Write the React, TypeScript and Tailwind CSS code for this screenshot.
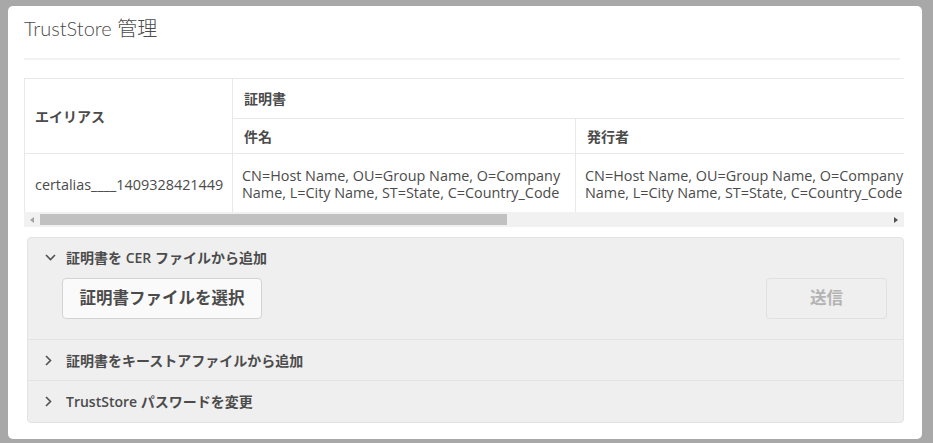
const CERT_TEXT = "CN=Host Name, OU=Group Name, O=Company Name, L=City Name, ST=State, C=Country_Code";

const FONT = { fontFamily: '"Open Sans", "Noto Sans CJK JP", sans-serif' };
const TITLE_FONT = { fontFamily: 'Lato, "Noto Sans CJK JP", sans-serif' };

function ChevronDown() {
  return (
    <svg width="11" height="7" viewBox="0 0 11 7" className="shrink-0">
      <path d="M1 1 L5.5 5.5 L10 1" fill="none" stroke="#505050" strokeWidth="1.6" />
    </svg>
  );
}

function ChevronRight() {
  return (
    <svg width="7" height="11" viewBox="0 0 7 11" className="shrink-0">
      <path d="M1 1 L5.5 5.5 L1 10" fill="none" stroke="#505050" strokeWidth="1.6" />
    </svg>
  );
}

export default function App() {
  return (
    <div className="relative h-[443px] w-[933px] overflow-hidden bg-[#a8a8a8] pl-[8px] pt-[6px] text-[#4b4b4b]" style={FONT}>
      <div className="h-[433px] w-[914px] rounded-[5px] bg-white px-4">
        {/* Header */}
        <h1 className="pt-2 text-[20px] font-light leading-[28px] text-[#4b4b4b]" style={TITLE_FONT}>
          TrustStore 管理
        </h1>
        <div className="mr-[6px] mt-[16px] h-[2px] bg-[#f2f2f2]" />

        {/* Table */}
        <div className="mt-[18px] w-[880px]">
          <div className="h-[134px] overflow-hidden bg-white">
            <table className="w-[1060px] table-fixed border-collapse text-[14px]">
              <colgroup>
                <col className="w-[208px]" />
                <col className="w-[343px]" />
                <col className="w-[509px]" />
              </colgroup>
              <thead>
                <tr className="h-[40px]">
                  <th rowSpan={2} className="border border-[#e8e8e8] px-[10px] text-left font-bold">
                    エイリアス
                  </th>
                  <th colSpan={2} className="border border-[#e8e8e8] px-[11px] text-left font-bold">
                    証明書
                  </th>
                </tr>
                <tr className="h-[35px]">
                  <th className="border border-[#e8e8e8] px-[11px] text-left font-bold">件名</th>
                  <th className="border border-[#e8e8e8] px-[11px] text-left font-bold">発行者</th>
                </tr>
              </thead>
              <tbody className="text-[14.4px]">
                <tr>
                  <td className="border border-[#e8e8e8] px-[10px] py-[13px] leading-[17px]">certalias____1409328421449</td>
                  <td className="border border-[#e8e8e8] px-[9px] py-[13px] leading-[17px]">{CERT_TEXT}</td>
                  <td className="border border-[#e8e8e8] py-[13px] pl-[9px] pr-[180px] leading-[17px]">{CERT_TEXT}</td>
                </tr>
              </tbody>
            </table>
          </div>
          {/* Scrollbar */}
          <div className="flex h-[15px] items-center bg-[#f1f1f1]">
            <div className="flex w-[16px] justify-center">
              <div className="h-0 w-0 border-y-[3.5px] border-r-[4px] border-y-transparent border-r-[#a3a3a3]" />
            </div>
            <div className="h-[11px] w-[467px] bg-[#c1c1c1]" />
            <div className="flex-1" />
            <div className="flex w-[16px] justify-center">
              <div className="h-0 w-0 border-y-[3.5px] border-l-[4px] border-y-transparent border-l-[#505050]" />
            </div>
          </div>
        </div>

        {/* Accordion */}
        <div className="ml-[3px] mt-[10px] w-[877px] rounded-[4px] border border-[#e3e3e3] bg-[#efefef]">
          <div className="border-b border-[#e3e3e3] pb-[20px]">
            <div className="flex h-[38px] items-center gap-[10px] pl-[17px] text-[14px] font-semibold">
              <ChevronDown />
              <span>証明書を CER ファイルから追加</span>
            </div>
            <div className="mt-[2px] flex items-center justify-between pl-[34px] pr-[16px]">
              <button className="h-[41px] w-[200px] rounded-[4px] border border-[#d3d3d3] bg-[#fafafa] text-[16.5px] font-bold text-[#4b4b4b]">
                証明書ファイルを選択
              </button>
              <button className="h-[41px] w-[121px] rounded-[4px] border border-[#e0e0e0] bg-[#efefef] text-[16.5px] font-bold text-[#b3b3b3]">
                送信
              </button>
            </div>
          </div>
          <div className="flex h-[41px] items-center gap-[14px] border-b border-[#e3e3e3] pl-[17px] text-[14px] font-semibold">
            <ChevronRight />
            <span>証明書をキーストアファイルから追加</span>
          </div>
          <div className="flex h-[41px] items-center gap-[14px] pl-[17px] text-[14px] font-semibold">
            <ChevronRight />
            <span>TrustStore パスワードを変更</span>
          </div>
        </div>
      </div>
    </div>
  );
}
